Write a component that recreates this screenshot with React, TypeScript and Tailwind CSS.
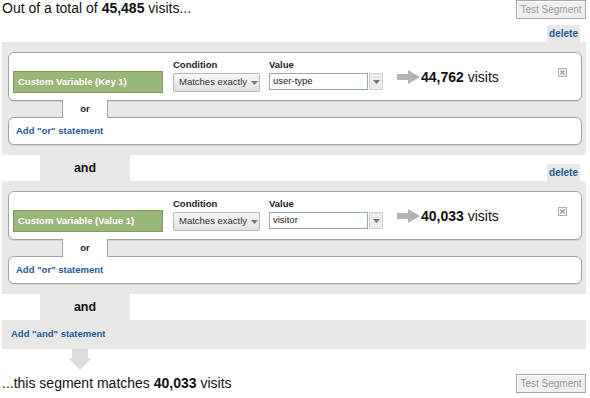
import React from "react";

const BLUE = "text-[#1d5a99]";

function Arrow() {
  return (
    <svg width="23" height="14" viewBox="0 0 23 14" className="shrink-0">
      <rect x="0" y="4" width="12" height="6" fill="#b3b3b3" />
      <polygon points="11,0 23,7 11,14" fill="#b3b3b3" />
    </svg>
  );
}

function CloseIcon() {
  return (
    <svg width="9" height="9" viewBox="0 0 9 9" className="absolute right-[14px] top-[15px]">
      <rect x="0.5" y="0.5" width="8" height="8" fill="#f4f4f4" stroke="#b0b0b0" />
      <path d="M2.5 2.5 L6.5 6.5 M6.5 2.5 L2.5 6.5" stroke="#9a9a9a" strokeWidth="1.2" />
    </svg>
  );
}

function Tri() {
  return (
    <svg width="7" height="4" viewBox="0 0 7 4" className="shrink-0">
      <polygon points="0,0 7,0 3.5,4" fill="#777" />
    </svg>
  );
}

function TestButton() {
  return (
    <div className="w-[70px] h-[19px] border border-[#a8a8a8] bg-[#efefef] shadow-[inset_1px_1px_0_#fff] flex items-center justify-center text-[10px] text-[#9a9a9a]">
      Test Segment
    </div>
  );
}

function Block({ label, value, count }: { label: string; value: string; count: string }) {
  return (
    <div className="bg-[#e8e8e8] pl-[6px] pr-[4px] pt-[10px] pb-[10px]">
      <div className="relative h-[49px] rounded-[6px] border border-[#a3a3a3] bg-white flex items-start shadow-[0_1px_0_#d4d4d4]">
        <div className="ml-[4px] mt-[18px] w-[150px] h-[22px] bg-[#9bb679] border border-[#7e9f57] flex items-center pl-[4px] text-white font-bold text-[9.5px]">
          {label}
        </div>
        <div className="ml-[10px] mt-[5px] flex flex-col">
          <div className="h-[13px] leading-[13px] text-[9.5px] font-bold text-[#222]">Condition</div>
          <div className="mt-[2px] w-[87px] h-[19px] rounded-[2px] border border-[#b8b8b8] bg-gradient-to-b from-[#f7f7f7] to-[#e2e2e2] flex items-center pl-[5px] gap-[4px] text-[9.5px] text-[#333]">
            <span>Matches exactly</span>
            <Tri />
          </div>
        </div>
        <div className="ml-[9px] mt-[5px] flex flex-col">
          <div className="h-[13px] leading-[13px] text-[9.5px] font-bold text-[#222]">Value</div>
          <div className="mt-[2px] flex">
            <div className="w-[99px] h-[17px] border border-[#8ea9c6] bg-white flex items-center pl-[3px] text-[9.5px] text-[#222]">
              {value}
            </div>
            <div className="ml-px w-[14px] h-[17px] border border-[#d0d0d0] bg-[#ececec] flex items-center justify-center">
              <Tri />
            </div>
          </div>
        </div>
        <div className="ml-[14px] mt-[16px] flex items-center gap-[1px] text-[14px] leading-[16px] text-[#111]">
          <Arrow />
          <span>
            <b>{count}</b> visits
          </span>
        </div>
        <CloseIcon />
      </div>
      <div className="relative z-10 -my-px ml-[54px] w-[46px] h-[18px] bg-white border-x border-[#a3a3a3] flex items-center justify-center text-[9.5px] font-bold text-[#222]">
        or
      </div>
      <div className="h-[28px] rounded-[6px] border border-[#a3a3a3] bg-white flex items-center pl-[7px] shadow-[0_1px_0_#d4d4d4]">
        <span className={`text-[9.5px] font-bold ${BLUE}`}>Add "or" statement</span>
      </div>
    </div>
  );
}

function DeleteTab() {
  return (
    <div className={`mr-[6px] w-[33px] h-[17px] bg-[#e8e8e8] flex items-center justify-center text-[10px] font-bold ${BLUE}`}>
      delete
    </div>
  );
}

function AndRow({ withDelete }: { withDelete?: boolean }) {
  return (
    <div className="h-[26px] flex items-end justify-between">
      <div className="ml-[38px] w-[90px] h-full bg-[#e8e8e8] flex items-center justify-center text-[12.5px] font-bold text-[#111]">
        and
      </div>
      {withDelete ? <DeleteTab /> : null}
    </div>
  );
}

export default function App() {
  return (
    <div
      className="w-[590px] h-[398px] bg-white pl-[2px] pr-[4px] overflow-hidden text-[#111]"
      style={{ fontFamily: '"Liberation Sans", Arial, sans-serif' }}
    >
      <div className="h-[25px] flex items-start justify-between">
        <div className="text-[14px] leading-[14px] mt-px">
          Out of a total of <b>45,485</b> visits...
        </div>
        <TestButton />
      </div>
      <div className="h-[17px] flex justify-end">
        <DeleteTab />
      </div>
      <Block label="Custom Variable (Key 1)" value="user-type" count="44,762" />
      <AndRow withDelete />
      <Block label="Custom Variable (Value 1)" value="visitor" count="40,033" />
      <AndRow />
      <div className="h-[29px] bg-[#e8e8e8] flex items-center pl-[9px]">
        <span className={`text-[9.5px] font-bold ${BLUE}`}>Add "and" statement</span>
      </div>
      <svg width="30" height="22" viewBox="0 0 30 22" className="ml-[62px] block">
        <rect x="8" y="0" width="16" height="10" fill="#dcdcdc" />
        <polygon points="4,9 28,9 16,21" fill="#dcdcdc" />
      </svg>
      <div className="flex items-start justify-between">
        <div className="text-[14px] leading-[16px] mt-[4px]">
          ...this segment matches <b>40,033</b> visits
        </div>
        <div className="mt-[3px]">
          <TestButton />
        </div>
      </div>
    </div>
  );
}
